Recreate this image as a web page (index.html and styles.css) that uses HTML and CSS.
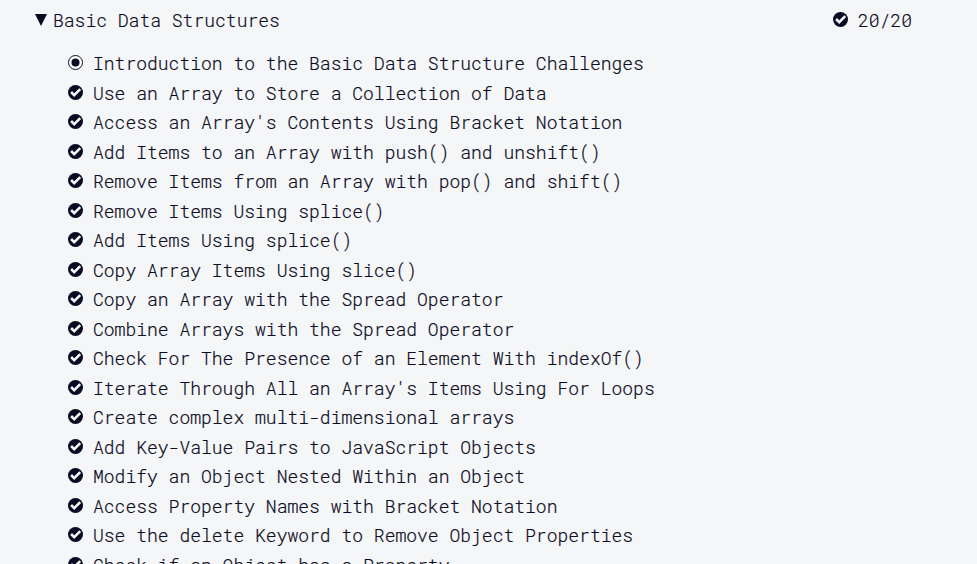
FILE: index.html
```html
<!DOCTYPE html>
<html lang="en">
<head>
<meta charset="utf-8">
<title>Basic Data Structures</title>
<link rel="stylesheet" href="styles.css">
</head>
<body>
<svg class="symbols" aria-hidden="true">
  <symbol id="check" viewBox="0 0 15 15"><circle cx="7.5" cy="7.5" r="7.5" fill="#0a0a23"/><path d="M3.1 7 6.2 10.1 12.2 4.1" fill="none" stroke="#f5f6f7" stroke-width="2.6"/></symbol>
  <symbol id="intro" viewBox="0 0 15 15"><circle cx="7.5" cy="7.5" r="7" fill="#fff" stroke="#0a0a23" stroke-width="1"/><circle cx="7.5" cy="7.5" r="4" fill="#0a0a23"/></symbol>
</svg>
<main class="block">
  <header class="heading">
    <svg class="arrow" viewBox="0 0 12 12"><path d="M0 0H12L6 12Z"/></svg>
    <h1 class="title">Basic Data Structures</h1>
    <div class="progress"><svg class="icon"><use href="#check"/></svg><span>20/20</span></div>
  </header>
  <ul class="list">
    <li class="item"><svg class="icon"><use href="#intro"/></svg><span>Introduction to the Basic Data Structure Challenges</span></li>
    <li class="item"><svg class="icon"><use href="#check"/></svg><span>Use an Array to Store a Collection of Data</span></li>
    <li class="item"><svg class="icon"><use href="#check"/></svg><span>Access an Array's Contents Using Bracket Notation</span></li>
    <li class="item"><svg class="icon"><use href="#check"/></svg><span>Add Items to an Array with push() and unshift()</span></li>
    <li class="item"><svg class="icon"><use href="#check"/></svg><span>Remove Items from an Array with pop() and shift()</span></li>
    <li class="item"><svg class="icon"><use href="#check"/></svg><span>Remove Items Using splice()</span></li>
    <li class="item"><svg class="icon"><use href="#check"/></svg><span>Add Items Using splice()</span></li>
    <li class="item"><svg class="icon"><use href="#check"/></svg><span>Copy Array Items Using slice()</span></li>
    <li class="item"><svg class="icon"><use href="#check"/></svg><span>Copy an Array with the Spread Operator</span></li>
    <li class="item"><svg class="icon"><use href="#check"/></svg><span>Combine Arrays with the Spread Operator</span></li>
    <li class="item"><svg class="icon"><use href="#check"/></svg><span>Check For The Presence of an Element With indexOf()</span></li>
    <li class="item"><svg class="icon"><use href="#check"/></svg><span>Iterate Through All an Array's Items Using For Loops</span></li>
    <li class="item"><svg class="icon"><use href="#check"/></svg><span>Create complex multi-dimensional arrays</span></li>
    <li class="item"><svg class="icon"><use href="#check"/></svg><span>Add Key-Value Pairs to JavaScript Objects</span></li>
    <li class="item"><svg class="icon"><use href="#check"/></svg><span>Modify an Object Nested Within an Object</span></li>
    <li class="item"><svg class="icon"><use href="#check"/></svg><span>Access Property Names with Bracket Notation</span></li>
    <li class="item"><svg class="icon"><use href="#check"/></svg><span>Use the delete Keyword to Remove Object Properties</span></li>
    <li class="item"><svg class="icon"><use href="#check"/></svg><span>Check if an Object has a Property</span></li>
  </ul>
</main>
</body>
</html>
```
FILE: styles.css
```css
* { box-sizing: border-box; }
body {
  margin: 0;
  height: 564px;
  overflow: hidden;
  background: #f5f6f7;
  color: #0a0a23;
  font-family: "Roboto Mono", "Noto Sans Mono", "Liberation Mono", monospace;
  font-size: 18px;
  font-weight: 300;
  -webkit-text-stroke: 0.2px #0a0a23;
}
.symbols { position: absolute; width: 0; height: 0; }
.block { padding: 5px 65px 0 35px; }
.heading { display: flex; align-items: center; height: 29px; }
.arrow { width: 12px; height: 12px; margin: 1px 6px 0 0; fill: #0a0a23; }
.title { margin: 0; font-size: 18px; font-weight: 300; }
.progress { display: flex; align-items: center; gap: 10px; margin-left: auto; }
.icon { display: block; flex: none; width: 15px; height: 15px; }
.list { margin: 15px 0 0; padding: 0 0 0 33px; list-style: none; }
.item { display: flex; align-items: center; gap: 10px; height: 29.5px; line-height: 29.5px; white-space: nowrap; }
.item .icon { margin-top: -2px; }
```
